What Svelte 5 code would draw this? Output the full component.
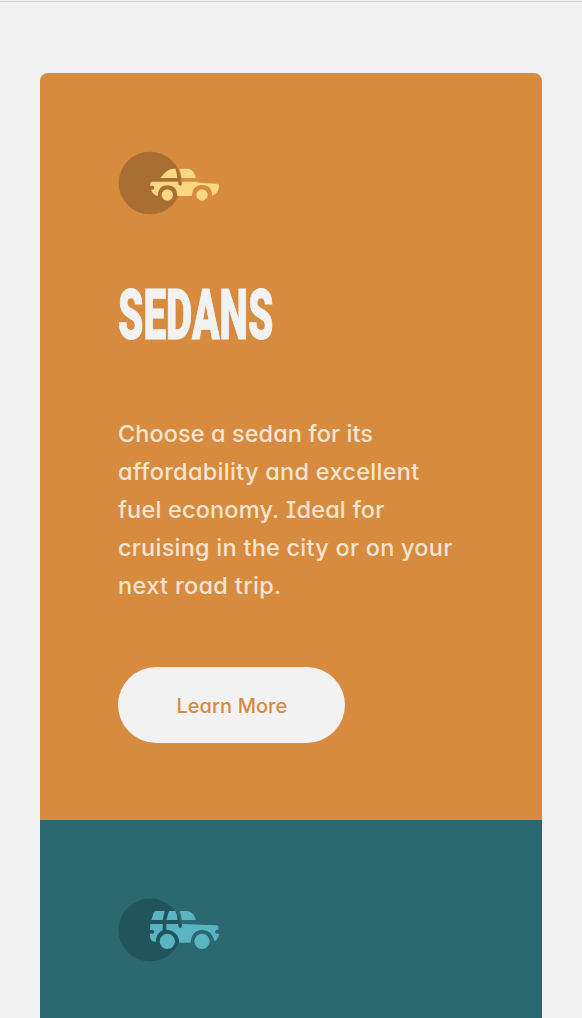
<script>
  const lines = [
    { text: 'Choose a sedan for its', width: 255 },
    { text: 'affordability and excellent', width: 301.5 },
    { text: 'fuel economy. Ideal for', width: 266.5 },
    { text: 'cruising in the city or on your', width: 334.5 },
    { text: 'next road trip.', width: 163.5 }
  ];

  // Spreads a line of text to its set measure with letter spacing.
  function measure(node, width) {
    const fit = () => {
      node.style.letterSpacing = '0px';
      const natural = node.getBoundingClientRect().width;
      node.style.letterSpacing = `${(width - natural) / node.textContent.length}px`;
    };
    fit();
    document.fonts.ready.then(fit);
  }
</script>

<main>
  <section class="card sedans">
    <svg class="icon" viewBox="24 33 303 189" aria-hidden="true">
      <circle cx="120" cy="129" r="94" fill="#a96f32" />
      <g fill="#fbd784">
        <path d="M151 114Q171 86 192 86H196Q201 98 202 114Z" />
        <path d="M208 86H234Q251 87 258 114H215Q213 99 208 86Z" />
        <path d="M124 125H205V132Q206 137 211 137Q216 137 216 132V125H258Q273 129 322 131Q328 132 327 141Q325 160 306 168Q306 135 276 135Q247 136 245 168H202Q202 136 172 136Q144 137 143 168Q128 164 123 149H128Q133 148 133 143Q132 137 128 137H120Q120 129 124 125Z" />
        <circle cx="172" cy="165" r="17" />
        <circle cx="276" cy="165" r="17" />
      </g>
    </svg>
    <h1><span>SEDANS</span></h1>
    <p>
      {#each lines as line}
        <span class="line"><span use:measure={line.width}>{line.text}</span></span>
      {/each}
    </p>
    <button><span use:measure={111}>Learn More</span></button>
  </section>
  <section class="card suvs">
    <svg class="icon" viewBox="24 39 303 189" aria-hidden="true">
      <circle cx="120" cy="135" r="94.5" fill="#22545b" />
      <g fill="#5ab4c2">
        <path d="M124 105L131 84Q133 78 138 78H164L158 105Z" />
        <path d="M177 78H196Q202 90 203 105H169Z" />
        <path d="M209 78H231Q251 80 258 105H215Q214 90 209 78Z" />
        <path d="M121 117H158V136Q139 144 137 171Q121 169 120 155V146H128Q133 145 133 140Q132 135 128 135H120Z" />
        <path d="M169 117H205V124Q206 129 211 129Q216 129 216 124V117L322 121Q326 123 326 134H320Q315 136 315 141Q316 146 320 146H327Q326 162 313 168Q307 136 276 134Q244 137 242 173H208Q206 138 169 134Z" />
        <circle cx="172" cy="169" r="23" />
        <circle cx="276" cy="169" r="23" />
      </g>
    </svg>
  </section>
</main>

<style>
  :global(body) {
    margin: 0;
    background: #f1f1f1;
    overflow: hidden;
  }
  main {
    box-sizing: border-box;
    height: 1017px;
    padding: 71px 40px 0;
    border-top: 1px solid #d3d4d4;
    margin-top: 1px;
    overflow: hidden;
    font-family: Inter, sans-serif;
  }
  .card {
    box-sizing: border-box;
    width: 502px;
    padding: 78px 78px 0;
  }
  .sedans {
    height: 747px;
    background: #d68b3e;
    border-radius: 8px 8px 0 0;
  }
  .suvs {
    height: 747px;
    background: #2b686f;
  }
  .icon {
    display: block;
    width: 101px;
    height: 63px;
    overflow: visible;
  }
  h1 {
    margin: 60px 0 0;
    height: 80px;
    color: #f2f2f2;
    font: 900 71px/81px Roboto, sans-serif;
  }
  h1 span {
    display: inline-block;
    transform: scaleX(0.571);
    transform-origin: left;
    -webkit-text-stroke: 1px #f2f2f2;
  }
  p {
    margin: 61px 0 0;
    color: #f7e3cf;
    font-size: 23.5px;
    font-weight: 500;
    line-height: 38px;
    font-feature-settings: 'cv11', 'cv08';
  }
  .line {
    display: block;
    white-space: nowrap;
  }
  .line span,
  button span {
    display: inline-block;
    white-space: nowrap;
  }
  button {
    display: flex;
    align-items: center;
    justify-content: center;
    width: 227px;
    height: 76px;
    margin: 62px 0 0 0.4px;
    padding: 2px 0 0;
    border: 0;
    border-radius: 38px;
    background: #f2f2f2;
    color: #d68b3e;
    font: 500 20px Inter, sans-serif;
    font-feature-settings: 'cv11';
  }
</style>
